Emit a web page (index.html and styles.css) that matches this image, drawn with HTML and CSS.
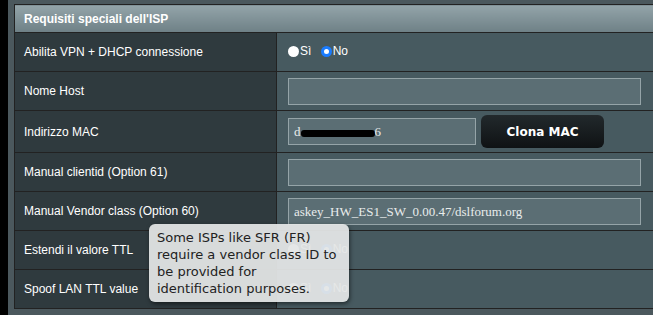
FILE: index.html
```html
<!DOCTYPE html>
<html lang="it">
<head>
    <meta charset="UTF-8">
    <title>Requisiti speciali dell'ISP</title>
    <link rel="stylesheet" href="styles.css">
</head>
<body>

    <div class="page">
        <table class="form-table">
            <thead>
                <tr>
                    <th colspan="2">Requisiti speciali dell'ISP</th>
                </tr>
            </thead>
            <tbody>
                <tr>
                    <td class="label">Abilita VPN + DHCP connessione</td>
                    <td class="value">
                        <label class="radio"><span class="dot"></span>Sì</label>
                        <label class="radio"><span class="dot checked"></span>No</label>
                    </td>
                </tr>
                <tr>
                    <td class="label">Nome Host</td>
                    <td class="value"><div class="field"></div></td>
                </tr>
                <tr>
                    <td class="label">Indirizzo MAC</td>
                    <td class="value">
                        <div class="mac-row">
                            <div class="field short">d<span class="redact"></span>6</div>
                            <button class="btn">Clona MAC</button>
                        </div>
                    </td>
                </tr>
                <tr>
                    <td class="label">Manual clientid (Option 61)</td>
                    <td class="value"><div class="field"></div></td>
                </tr>
                <tr>
                    <td class="label">Manual Vendor class (Option 60)</td>
                    <td class="value"><div class="field">askey_HW_ES1_SW_0.00.47/dslforum.org</div></td>
                </tr>
                <tr>
                    <td class="label">Estendi il valore TTL</td>
                    <td class="value">
                        <label class="radio"><span class="dot"></span>Sì</label>
                        <label class="radio"><span class="dot checked"></span>No</label>
                    </td>
                </tr>
                <tr>
                    <td class="label">Spoof LAN TTL value</td>
                    <td class="value">
                        <label class="radio"><span class="dot"></span>Sì</label>
                        <label class="radio"><span class="dot checked"></span>No</label>
                    </td>
                </tr>
            </tbody>
        </table>

        <div class="tooltip">Some ISPs like SFR (FR) require a vendor class ID to be provided for identification purposes.</div>
    </div>

</body>
</html>
```

FILE: styles.css
```css
* {
    margin: 0;
    padding: 0;
    box-sizing: border-box;
}

body {
    background: #000;
    font-family: Arial, "Liberation Sans", sans-serif;
    font-size: 12px;
    color: #fff;
    overflow: hidden;
}

.page {
    position: relative;
    margin-left: 8px;
    height: 315px;
    background: #4b585d;
    padding: 4px 0 0 6px;
}

.form-table {
    width: 680px;
    border-collapse: collapse;
    border-top: 1px solid #222;
    border-left: 1px solid #222;
}

.form-table th {
    height: 28px;
    text-align: left;
    padding-left: 9px;
    font-size: 12px;
    font-weight: bold;
    background: linear-gradient(#93a4a9, #6e8086);
    border-bottom: 1px solid #222;
}

.form-table td {
    border-bottom: 1px solid #222;
    height: 39px;
}

.form-table tr:nth-child(3) td {
    height: 42px;
}

.label {
    width: 262px;
    padding-left: 9px;
    background: #2f3a3e;
    border-right: 1px solid #222;
}

.value {
    background: #475a60;
    padding-left: 11px;
}

.radio {
    display: inline-flex;
    align-items: center;
    margin-right: 6px;
    color: #fff;
}

.dot {
    width: 11px;
    height: 11px;
    border-radius: 50%;
    background: #fff;
    margin-right: 1px;
}

.dot.checked {
    background: #fff;
    border: 3px solid #1a7cff;
}

.field {
    width: 353px;
    height: 27px;
    background: #5b6e74;
    border: 1px solid #95a4a8;
    font-family: "Liberation Serif", serif;
    font-size: 13px;
    color: #e8ecec;
    padding: 5px 5px 0;
    white-space: nowrap;
}

.field.short {
    width: 188px;
}

.redact {
    display: inline-block;
    width: 74px;
    height: 7px;
    background: #000;
    border-radius: 3px;
    vertical-align: middle;
}

.mac-row {
    display: flex;
    align-items: center;
    gap: 5px;
}

.btn {
    width: 123px;
    height: 33px;
    border: none;
    border-radius: 6px;
    background: linear-gradient(#22292c, #0f1214);
    color: #fff;
    font-family: "DejaVu Sans", Verdana, sans-serif;
    font-weight: bold;
    font-size: 12px;
}

.tooltip {
    position: absolute;
    left: 141px;
    top: 224px;
    width: 200px;
    padding: 5px 7px 5px 8px;
    background: rgba(227, 230, 230, 0.94);
    color: #222;
    border-radius: 6px;
    box-shadow: 1px 2px 4px rgba(0, 0, 0, 0.5);
    font-family: "DejaVu Sans", Verdana, sans-serif;
    font-size: 13px;
    line-height: 17px;
}
```
